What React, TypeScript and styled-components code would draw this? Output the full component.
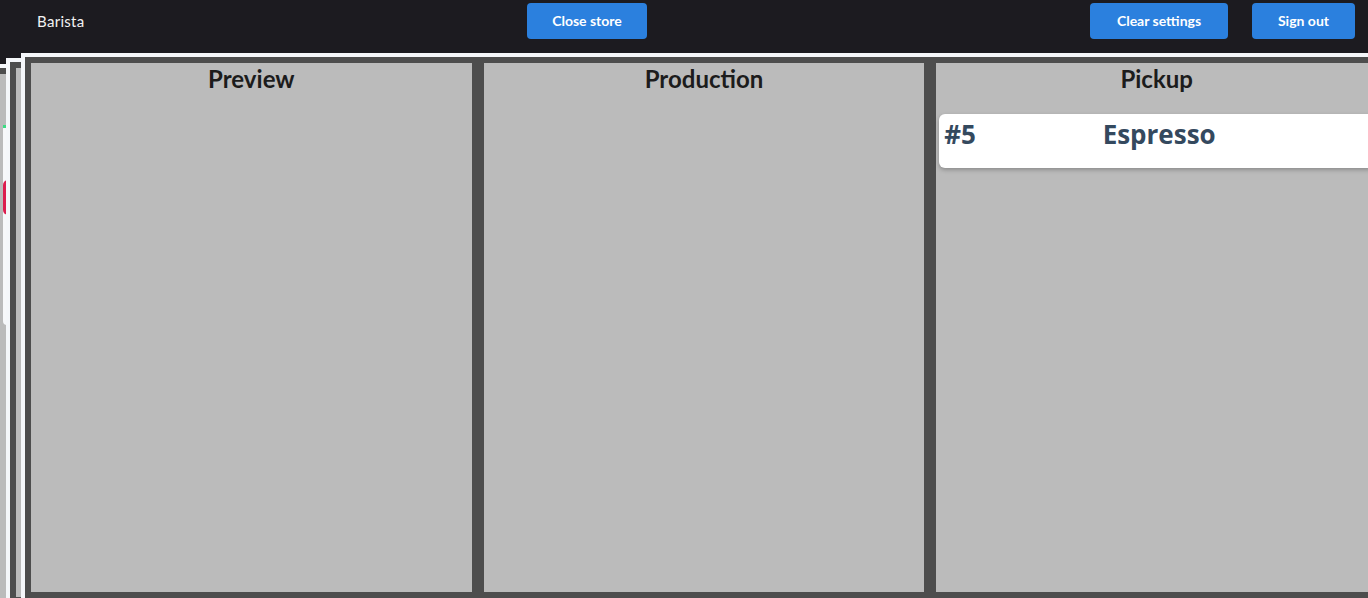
import React from "react";
import styled, { createGlobalStyle } from "styled-components";

const GlobalStyle = createGlobalStyle`
  html, body {
    margin: 0;
    padding: 0;
    background: #1c1b20;
    overflow: hidden;
    font-family: Lato, "Noto Sans", sans-serif;
  }
  * { box-sizing: border-box; }
`;

const Page = styled.div`
  width: 1368px;
  height: 598px;
  overflow: hidden;
`;

const NavBar = styled.header`
  height: 42px;
  display: flex;
  align-items: center;
  justify-content: space-between;
  padding: 0 13px 0 37px;
`;

const Brand = styled.span`
  color: #f2f2f2;
  font-size: 15px;
  letter-spacing: 0.3px;
  font-weight: 400;
  line-height: 18px;
  margin-top: -1px;
  width: 47px;
  white-space: nowrap;
`;

const NavGroup = styled.div`
  display: flex;
  gap: 24px;
`;

const NavButton = styled.button<{ $w: number }>`
  width: ${(p) => p.$w}px;
  height: 36px;
  border: none;
  border-radius: 4px;
  background: #2b80de;
  color: #ffffff;
  font-family: Lato, "Noto Sans", sans-serif;
  font-weight: 700;
  font-size: 14px;
  line-height: 16px;
  padding: 0 0 1px;
  cursor: pointer;
`;

const Stage = styled.div`
  position: relative;
  margin-top: 11px;
`;

const Layer = styled.section`
  width: 1366px;
  height: 549px;
  border: 4px solid #f5f7fa;
  background: #4d4d4d;
  padding: 6px;
  display: grid;
  grid-template-columns: 1fr 1fr 1fr;
  gap: 12px;
`;

const BackLayer = styled(Layer)<{ $left: number; $top: number }>`
  position: absolute;
  left: ${(p) => p.$left}px;
  top: ${(p) => p.$top}px;
`;

const FrontLayer = styled(Layer)`
  position: relative;
  z-index: 2;
  margin-left: 21px;
`;

const Column = styled.div`
  background: #bbbbbb;
  padding: 3px;
  display: flex;
  flex-direction: column;
  min-height: 0;
`;

const ColumnTitle = styled.h2`
  margin: 0 0 22px;
  height: 26px;
  line-height: 26px;
  text-align: center;
  font-size: 24px;
  font-weight: 700;
  color: #1c1c1c;
`;

const OrderCard = styled.div`
  height: 54px;
  background: #ffffff;
  border-radius: 6px;
  box-shadow: 0 2px 4px rgba(0, 0, 0, 0.25);
  display: grid;
  grid-template-columns: 1fr auto 1fr;
  align-items: start;
  padding: 3px 0 0 5px;
  color: #34495e;
  font-family: "Open Sans", Lato, sans-serif;
  font-size: 26px;
  font-weight: 700;
  line-height: 34px;
`;

const OrderNumber = styled.span`
  justify-self: start;
`;

const OrderName = styled.span`
  justify-self: center;
`;

const GhostCard = styled.div`
  margin-top: 48px;
  height: 200px;
  background: #f7f8fa;
  border-radius: 4px;
  display: flex;
  flex-direction: column;
  gap: 52px;
`;

const Badge = styled.div`
  width: 40px;
  height: 3px;
  background: #3ddc84;
`;

const DangerButton = styled.div`
  height: 35px;
  border-radius: 5px;
  background: #dc1e4f;
  width: 120px;
`;

export default function App() {
  return (
    <Page>
      <GlobalStyle />
      <NavBar>
        <Brand>Barista</Brand>
        <NavButton $w={120}>Close store</NavButton>
        <NavGroup>
          <NavButton $w={138}>Clear settings</NavButton>
          <NavButton $w={103}>Sign out</NavButton>
        </NavGroup>
      </NavBar>
      <Stage>
        <BackLayer $left={-10} $top={11}>
          <Column>
            <GhostCard>
              <Badge />
              <DangerButton />
            </GhostCard>
          </Column>
          <Column />
          <Column />
        </BackLayer>
        <BackLayer $left={6} $top={5}>
          <Column />
          <Column />
          <Column />
        </BackLayer>
        <FrontLayer>
          <Column>
            <ColumnTitle>Preview</ColumnTitle>
          </Column>
          <Column>
            <ColumnTitle>Production</ColumnTitle>
          </Column>
          <Column>
            <ColumnTitle>Pickup</ColumnTitle>
            <OrderCard>
              <OrderNumber>#5</OrderNumber>
              <OrderName>Espresso</OrderName>
            </OrderCard>
          </Column>
        </FrontLayer>
      </Stage>
    </Page>
  );
}
